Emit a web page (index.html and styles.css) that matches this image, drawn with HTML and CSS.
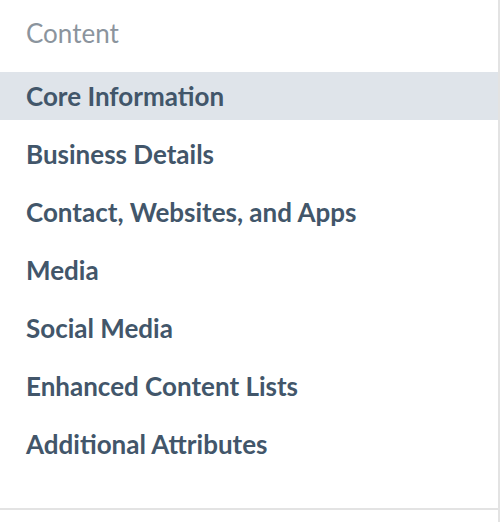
FILE: index.html
```html
<!DOCTYPE html>
<html>
<head>
<meta charset="utf-8">
<link rel="stylesheet" href="styles.css">
</head>
<body>
<div class="sidebar">
  <nav class="panel">
    <div class="heading">Content</div>
    <ul class="menu">
      <li class="item active">Core Information</li>
      <li class="item">Business Details</li>
      <li class="item">Contact, Websites, and Apps</li>
      <li class="item">Media</li>
      <li class="item">Social Media</li>
      <li class="item">Enhanced Content Lists</li>
      <li class="item">Additional Attributes</li>
    </ul>
  </nav>
</div>
</body>
</html>
```
FILE: styles.css
```css
html, body {
  margin: 0;
  padding: 0;
  background: #ffffff;
  height: 100%;
}
body {
  font-family: "Lato", "Liberation Sans", sans-serif;
}
.sidebar {
  width: 498px;
  height: 100%;
  border-right: 2px solid #e3e3e3;
}
.panel {
  border-bottom: 2px solid #e3e3e3;
  padding-top: 9px;
  padding-bottom: 40px;
}
.heading {
  height: 48px;
  line-height: 48px;
  padding-left: 26px;
  font-size: 26px;
  color: #8b949d;
  margin-bottom: 15px;
}
.menu {
  list-style: none;
  margin: 0;
  padding: 0;
  display: flex;
  flex-direction: column;
  gap: 10px;
}
.item {
  height: 48px;
  line-height: 48px;
  padding-left: 26px;
  font-size: 26px;
  font-weight: 700;
  color: #42566a;
}
.item.active {
  background: #dfe4ea;
}
```
